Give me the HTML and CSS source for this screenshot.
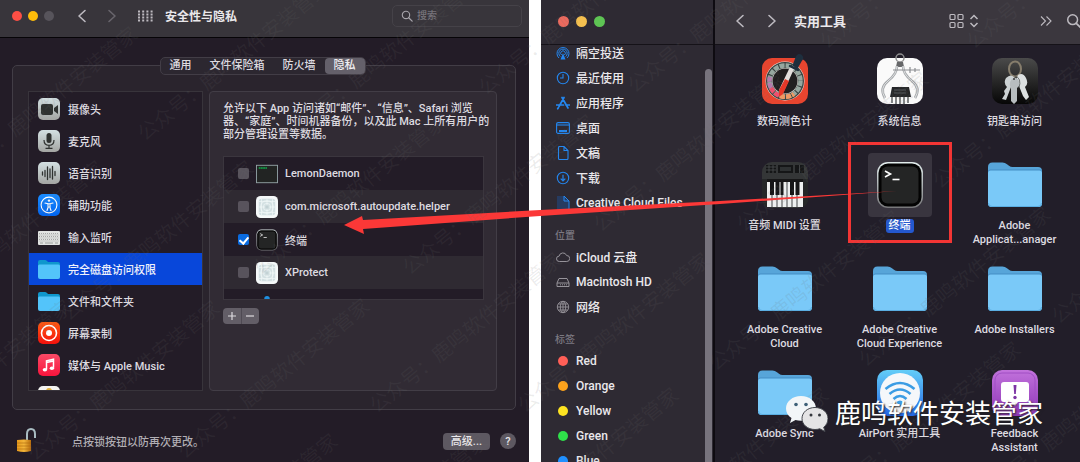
FILE: index.html
```html
<!DOCTYPE html>
<html lang="zh-CN">
<head>
    <meta charset="UTF-8">
    <meta name="viewport" content="width=device-width, initial-scale=1.0">
    <title>安全性与隐私</title>
    <link rel="stylesheet" href="styles.css">
</head>
<body>

    <!-- Shared icon shapes -->
    <svg class="sprite" aria-hidden="true">
        <defs>
            <linearGradient id="silver" x1="0" y1="0" x2="0" y2="1">
                <stop offset="0" stop-color="#d3e0e2"/><stop offset="1" stop-color="#a3a5a2"/>
            </linearGradient>
            <linearGradient id="blue" x1="0" y1="0" x2="0" y2="1">
                <stop offset="0" stop-color="#1a8cff"/><stop offset="1" stop-color="#0064f0"/>
            </linearGradient>
            <linearGradient id="orange" x1="0" y1="0" x2="0" y2="1">
                <stop offset="0" stop-color="#ff5a12"/><stop offset="1" stop-color="#f4110c"/>
            </linearGradient>
            <linearGradient id="pink" x1="0" y1="0" x2="0" y2="1">
                <stop offset="0" stop-color="#fb4a66"/><stop offset="1" stop-color="#f8143c"/>
            </linearGradient>
            <linearGradient id="dark" x1="0" y1="0" x2="0" y2="1">
                <stop offset="0" stop-color="#4a4a4a"/><stop offset="1" stop-color="#060606"/>
            </linearGradient>
            <linearGradient id="sky" x1="0" y1="0" x2="0" y2="1">
                <stop offset="0" stop-color="#63cdf8"/><stop offset="1" stop-color="#2467e6"/>
            </linearGradient>
            <linearGradient id="violet" x1="0" y1="0" x2="0" y2="1">
                <stop offset="0" stop-color="#c272dc"/><stop offset="1" stop-color="#8c35b4"/>
            </linearGradient>
            <linearGradient id="rim" x1="0" y1="0" x2="0" y2="1">
                <stop offset="0" stop-color="#e4efef"/><stop offset="1" stop-color="#77777a"/>
            </linearGradient>
            <linearGradient id="gold" x1="0" y1="0" x2="1" y2="0">
                <stop offset="0" stop-color="#e79a1b"/><stop offset="0.5" stop-color="#f3b53a"/><stop offset="1" stop-color="#b96d0c"/>
            </linearGradient>
        </defs>

        <symbol id="i-search" viewBox="0 0 14 14">
            <circle cx="5.8" cy="5.8" r="4.3" fill="none" stroke="currentColor" stroke-width="1.3"/>
            <path d="M9 9l4 4" stroke="currentColor" stroke-width="1.5" stroke-linecap="round"/>
        </symbol>
        <symbol id="i-left" viewBox="0 0 10 14">
            <path d="M8 1.5L2 7l6 5.5" fill="none" stroke="currentColor" stroke-width="1.6" stroke-linecap="round" stroke-linejoin="round"/>
        </symbol>
        <symbol id="i-right" viewBox="0 0 10 14">
            <path d="M2 1.5L8 7l-6 5.5" fill="none" stroke="currentColor" stroke-width="1.6" stroke-linecap="round" stroke-linejoin="round"/>
        </symbol>

        <symbol id="i-folder-small" viewBox="0 0 22 20">
            <path d="M0 3q0-2 2-2h5q1 0 2 1l1 1h10q2 0 2 2v6H0z" fill="#0f97cd"/>
            <path d="M0 7q0-1.500 1.500-1.500h19q1.500 0 1.500 1.500v11q0 2-2 2H2q-2 0-2-2z" fill="#53c4fa"/>
        </symbol>
        <symbol id="i-folder" viewBox="0 0 54 46">
            <path d="M0 5q0-4.500 4.500-4.500h10q2.500 0 4.500 1.700l2 1.600q1.500 1.200 3.500 1.200H50q4 0 4 4v32H0z" fill="#57a5d9"/>
            <path d="M0 10q0-2.500 2.500-2.500h49q2.500 0 2.500 2.500v31.500q0 3.500-3.500 3.500h-47q-3.500 0-3.500-3.500z" fill="#458ec5"/>
            <path d="M0 11q0-2.500 2.500-2.500h49q2.500 0 2.500 2.500v30q0 4-4 4H4q-4 0-4-4z" fill="#7ac9f8"/>
            <path d="M.5 41q0 3.500 3.500 3.500h46q3.500 0 3.500-3.500" fill="none" stroke="#5aaee2" stroke-width="1"/>
        </symbol>
        <symbol id="i-terminal" viewBox="0 0 48 48">
            <rect x="1" y="1" width="46" height="46" rx="11" fill="url(#rim)"/>
            <rect x="2.5" y="2.5" width="43" height="43" rx="9.5" fill="#030303"/>
            <rect x="5.5" y="5.5" width="37" height="37" rx="6" fill="#242525"/>
            <path d="M9 10l5.500 3L9 16" fill="none" stroke="#fff" stroke-width="1.6"/>
            <path d="M16.500 18.500h7" stroke="#fff" stroke-width="1.6"/>
        </symbol>
        <symbol id="i-installer" viewBox="0 0 24 24">
            <rect width="24" height="24" rx="5" fill="#f5f9f9"/>
            <rect x="3" y="3" width="18" height="18" rx="3" fill="#d3e0e2"/>
            <g fill="none" stroke="#f3f8f8" stroke-width=".7">
                <circle cx="12" cy="12" r="7"/><circle cx="12" cy="12" r="4"/>
                <path d="M3 12h18M12 3v18M6 3v18M18 3v18M3 6h18M3 18h18"/>
            </g>
            <circle cx="12" cy="12" r="2" fill="#c3d2d5"/>
        </symbol>
        <symbol id="i-doc" viewBox="0 0 14 14">
            <path d="M2.500 1.500q0-1 1-1H8l4 4v8q0 1-1 1H3.500q-1 0-1-1zM8 .5v4h4" fill="none" stroke="currentColor" stroke-width="1.1"/>
        </symbol>
        <symbol id="wm" overflow="visible">
            <text x="-10" y="7">公众号：鹿鸣软件安装管家</text>
        </symbol>
    </svg>

    <main class="desktop">

        <!-- System preferences -->
        <section class="window prefs">
            <header class="prefs-bar">
                <div class="lights">
                    <button class="light red" aria-label="关闭"></button>
                    <button class="light amber" aria-label="最小化"></button>
                    <button class="light off" aria-label="缩放"></button>
                </div>
                <button class="bar-btn" aria-label="后退"><svg width="10" height="14"><use href="#i-left"/></svg></button>
                <button class="bar-btn dim" aria-label="前进"><svg width="10" height="14"><use href="#i-right"/></svg></button>
                <button class="bar-btn" aria-label="显示全部">
                    <svg width="16" height="12" viewBox="0 0 16 12">
                        <path d="M0 1.500h15M0 4.500h15M0 7.500h15M0 10.500h15" stroke="currentColor" stroke-width="2" stroke-dasharray="2 2.200"/>
                    </svg>
                </button>
                <h1>安全性与隐私</h1>
                <label class="search">
                    <svg width="12" height="12"><use href="#i-search"/></svg>
                    <input type="search" placeholder="搜索" aria-label="搜索">
                </label>
            </header>

            <div class="group">
                <nav class="tabs">
                    <button>通用</button>
                    <button>文件保险箱</button>
                    <button>防火墙</button>
                    <button class="active">隐私</button>
                </nav>

                <div class="panes">
                    <ul class="services">
                        <li>
                            <svg class="app" viewBox="0 0 22 22"><rect width="22" height="22" rx="5" fill="url(#silver)"/><rect x="3" y="6" width="12" height="11" rx="2" fill="#2f3230"/><path d="M16 10l4-3v9l-4-3z" fill="#2f3230"/></svg>
                            摄像头
                        </li>
                        <li>
                            <svg class="app" viewBox="0 0 22 22"><rect width="22" height="22" rx="5" fill="url(#silver)"/><rect x="8.5" y="3" width="5" height="10" rx="2.5" fill="#2f3230"/><path d="M6 10q0 5.300 5 5.300T16 10M11 15.500v2.500M7.500 18.300h7" fill="none" stroke="#2f3230" stroke-width="1.2"/></svg>
                            麦克风
                        </li>
                        <li>
                            <svg class="app" viewBox="0 0 22 22"><rect width="22" height="22" rx="5" fill="url(#silver)"/><path d="M4.500 10v3M7 8.500v6M9.500 5v12.500M12 7v8.500M14.500 4.500V17M17 9.500v4" stroke="#2f3230" stroke-width="1.3" stroke-linecap="round"/></svg>
                            语音识别
                        </li>
                        <li>
                            <svg class="app" viewBox="0 0 22 22"><rect width="22" height="22" rx="5" fill="url(#blue)"/><circle cx="11" cy="11" r="7.9" fill="none" stroke="#fff" stroke-width="1.1"/><circle cx="11" cy="6.600" r="1.200" fill="#fff"/><path d="M7 9l3 .7h2l3-.7M10 9.700h2v3.300h-2zM10.200 13l-1.200 3.500M11.800 13l1.200 3.500" fill="none" stroke="#fff" stroke-width="1.1" stroke-linecap="round"/></svg>
                            辅助功能
                        </li>
                        <li>
                            <svg class="app" viewBox="0 0 22 22"><rect y="5" width="22" height="14" rx="1" fill="#e2e3e2"/><path d="M1 7.500h20M1 10.500h20M1 13.500h20" stroke="#8b8d8d" stroke-width="1" stroke-dasharray=".7 1.300"/><path d="M1 9h20M1 12h20M1 15h20" stroke="#a8aaaa" stroke-width=".5"/><path d="M2 17h3M7 17h8M17 17h3" stroke="#8b8d8d" stroke-width=".8"/></svg>
                            输入监听
                        </li>
                        <li class="selected">
                            <svg class="app" viewBox="0 0 22 20"><use href="#i-folder-small"/></svg>
                            完全磁盘访问权限
                        </li>
                        <li>
                            <svg class="app" viewBox="0 0 22 20"><use href="#i-folder-small"/></svg>
                            文件和文件夹
                        </li>
                        <li>
                            <svg class="app" viewBox="0 0 22 22"><rect width="22" height="22" rx="5" fill="url(#orange)"/><circle cx="11" cy="11" r="7.5" fill="none" stroke="#fff" stroke-width="1.6"/><circle cx="11" cy="11" r="3" fill="#fff"/></svg>
                            屏幕录制
                        </li>
                        <li>
                            <svg class="app" viewBox="0 0 22 22"><rect width="22" height="22" rx="5" fill="url(#pink)"/><path d="M8.500 15.500V6.800l7-1.600v8.600M8.500 8.500l7-1.600" fill="none" stroke="#fff" stroke-width="1.5"/><ellipse cx="6.9" cy="15.8" rx="2.2" ry="1.8" fill="#fff"/><ellipse cx="13.9" cy="14.2" rx="2.2" ry="1.8" fill="#fff"/></svg>
                            媒体与 Apple Music
                        </li>
                        <li>
                            <svg class="app" viewBox="0 0 22 22"><rect width="22" height="22" rx="5" fill="#f3f3f1"/><circle cx="11" cy="5" r="3" fill="#e0b03c"/></svg>
                        </li>
                    </ul>

                    <div class="detail">
                        <p>允许以下 App 访问诸如“邮件”、“信息”、Safari 浏览<br>器、“家庭”、时间机器备份，以及此 Mac 上所有用户的<br>部分管理设置等数据。</p>
                        <ul class="apps">
                            <li><label>
                                <input type="checkbox">
                                <svg class="app" viewBox="0 0 24 24"><rect x=".5" y="2.5" width="23" height="19" fill="#222423" stroke="#93a3a6"/><path d="M3 5.500h9" stroke="#0fa84a" stroke-width="1.5" stroke-dasharray="2 .4"/></svg>
                                LemonDaemon
                            </label></li>
                            <li><label>
                                <input type="checkbox">
                                <svg class="app"><use href="#i-installer"/></svg>
                                com.microsoft.autoupdate.helper
                            </label></li>
                            <li><label>
                                <input type="checkbox" checked>
                                <svg class="app"><use href="#i-terminal"/></svg>
                                终端
                            </label></li>
                            <li><label>
                                <input type="checkbox">
                                <svg class="app"><use href="#i-installer"/></svg>
                                XProtect
                            </label></li>
                            <li class="next">
                                <svg class="app" viewBox="0 0 24 24"><circle cx="12" cy="4" r="3" fill="#1f8fe0"/></svg>
                            </li>
                        </ul>
                        <div class="stepper">
                            <button aria-label="添加"><svg width="10" height="10" viewBox="0 0 10 10"><path d="M5 1v8M1 5h8" stroke="currentColor" stroke-width="1.2"/></svg></button>
                            <button aria-label="移除"><svg width="10" height="10" viewBox="0 0 10 10"><path d="M1 5h8" stroke="currentColor" stroke-width="1.2"/></svg></button>
                        </div>
                    </div>
                </div>
            </div>

            <footer class="prefs-foot">
                <svg width="20" height="28" viewBox="0 0 20 28">
                    <path d="M11 14V7q0-5 4-5t4 5v4" fill="none" stroke="#a9bcc2" stroke-width="2"/>
                    <path d="M1 13q7-1 14 0v11q-7 2-14 0z" fill="url(#gold)"/>
                    <path d="M1 16h14M1 19h14M1 22h14" stroke="#a9640f" stroke-width=".6"/>
                </svg>
                <span>点按锁按钮以防再次更改。</span>
                <button class="advanced">高级...</button>
                <button class="help" aria-label="帮助">?</button>
            </footer>
        </section>

        <!-- Finder -->
        <section class="window finder">
            <aside class="sidebar">
                <div class="side-top">
                    <div class="lights">
                        <button class="light red" aria-label="关闭"></button>
                        <button class="light amber" aria-label="最小化"></button>
                        <button class="light green" aria-label="缩放"></button>
                    </div>
                </div>
                <nav class="places">
                    <a href="#"><svg viewBox="0 0 14 14"><g fill="none" stroke="currentColor" stroke-width="1"><path d="M3 12a6 6 0 1 1 8 0M4.300 10.500a4.200 4.200 0 1 1 5.400 0M5.600 9a2.300 2.300 0 1 1 2.800 0"/></g><path d="M7 7l2.500 6.500h-5z" fill="currentColor"/></svg>隔空投送</a>
                    <a href="#"><svg viewBox="0 0 14 14"><circle cx="7" cy="7" r="5.7" fill="none" stroke="currentColor" stroke-width="1.1"/><path d="M7 3v4H4" fill="none" stroke="currentColor" stroke-width="1.1"/></svg>最近使用</a>
                    <a href="#"><svg viewBox="0 0 14 14"><path d="M8 1.500L3 10.500M6 1.500l6 10.500M.5 9h7M10 9h3.500M2.300 11.800l-.6 1" fill="none" stroke="currentColor" stroke-width="1.7" stroke-linecap="round"/></svg>应用程序</a>
                    <a href="#"><svg viewBox="0 0 14 14"><rect x=".6" y="1.6" width="12.8" height="10.8" rx="1.5" fill="none" stroke="currentColor" stroke-width="1.1"/><path d="M1 4h12" stroke="currentColor" stroke-width="1.1"/><path d="M3 10h8" stroke="currentColor" stroke-width="2"/></svg>桌面</a>
                    <a href="#"><svg><use href="#i-doc"/></svg>文稿</a>
                    <a href="#"><svg viewBox="0 0 14 14"><circle cx="7" cy="7" r="5.7" fill="none" stroke="currentColor" stroke-width="1.1"/><path d="M7 3.800v6M4.700 7.600L7 10l2.300-2.400" fill="none" stroke="currentColor" stroke-width="1.2"/></svg>下载</a>
                    <a href="#"><svg viewBox="0 0 14 14"><path d="M1 0h7l5 5v9H1z" fill="#263b60"/><path d="M8 0v5h5zM8 0l5 5v9" fill="none" stroke="currentColor" stroke-width="1"/></svg>Creative Cloud Files</a>
                    <h2>位置</h2>
                    <a href="#" class="grey"><svg viewBox="0 0 14 14"><path d="M3.300 11.500a2.700 2.700 0 0 1-.2-5.400 3.900 3.900 0 0 1 7.500-.6 3 3 0 0 1 .2 6z" fill="none" stroke="currentColor" stroke-width="1"/></svg>iCloud 云盘</a>
                    <a href="#" class="grey"><svg viewBox="0 0 14 14"><path d="M1 8l2-4.500h8L13 8v3.500H1zM1 8h12" fill="none" stroke="currentColor" stroke-width="1"/><path d="M4 9.800h7" stroke="currentColor" stroke-dasharray="1 1"/></svg>Macintosh HD</a>
                    <a href="#" class="grey"><svg viewBox="0 0 14 14"><g fill="none" stroke="currentColor" stroke-width=".9"><circle cx="7" cy="7" r="5.7"/><ellipse cx="7" cy="7" rx="2.7" ry="5.7"/><path d="M7 1.300v11.400M1.300 7h11.400M2.300 4h9.400M2.300 10h9.400"/></g></svg>网络</a>
                    <h2>标签</h2>
                    <a href="#"><i class="dot tag-red"></i>Red</a>
                    <a href="#"><i class="dot tag-orange"></i>Orange</a>
                    <a href="#"><i class="dot tag-yellow"></i>Yellow</a>
                    <a href="#"><i class="dot tag-green"></i>Green</a>
                    <a href="#"><i class="dot tag-blue"></i>Blue</a>
                </nav>
                <span class="scroll-thumb"></span>
            </aside>

            <div class="browser">
                <header class="finder-bar">
                    <button class="bar-btn" aria-label="后退"><svg width="10" height="14"><use href="#i-left"/></svg></button>
                    <button class="bar-btn" aria-label="前进"><svg width="10" height="14"><use href="#i-right"/></svg></button>
                    <h1>实用工具</h1>
                    <button class="bar-btn view" aria-label="显示方式">
                        <svg width="30" height="16" viewBox="0 0 30 16" fill="none" stroke="currentColor" stroke-width="1.2">
                            <rect x="1" y="1.5" width="5" height="5" rx="1"/><rect x="9" y="1.5" width="5" height="5" rx="1"/>
                            <rect x="1" y="9.5" width="5" height="5" rx="1"/><rect x="9" y="9.5" width="5" height="5" rx="1"/>
                            <path d="M21.500 6L25 2.500 28.500 6M21.500 10l3.500 3.500 3.500-3.500" stroke-width="1.5"/>
                        </svg>
                    </button>
                    <button class="bar-btn more" aria-label="更多"><svg width="12" height="12" viewBox="0 0 12 12"><path d="M1 1.500L5.500 6 1 10.500M6.500 1.500L11 6l-4.500 4.500" fill="none" stroke="currentColor" stroke-width="1.1"/></svg></button>
                    <button class="bar-btn find" aria-label="搜索"><svg width="16" height="16"><use href="#i-search"/></svg></button>
                </header>

                <div class="files">
                    <a href="#" class="file">
                        <span class="thumb"><svg width="48" height="56" viewBox="0 -4 48 56">
                            <rect x="1" y="1" width="46" height="46" rx="10" fill="#e8452f"/>
                            <circle cx="24" cy="24" r="19.5" fill="#e9e4df"/>
                            <circle cx="24" cy="24" r="16" fill="none" stroke="#3b4442" stroke-width="6"/>
                            <circle cx="24" cy="24" r="15.5" fill="none" stroke="#96a79f" stroke-width="4.5" stroke-dasharray="5 1.100"/>
                            <path d="M9 20a15.500 15.500 0 0 0 1 11" fill="none" stroke="#b77daf" stroke-width="4.5" stroke-dasharray="5 1.100"/>
                            <path d="M10 31a15.500 15.500 0 0 0 8 7.500" fill="none" stroke="#ef4f6d" stroke-width="4.5" stroke-dasharray="5 1.100"/>
                            <path d="M19 39a15.500 15.500 0 0 0 14-2" fill="none" stroke="#ee9a63" stroke-width="4.5" stroke-dasharray="5 1.100"/>
                            <circle cx="24" cy="24" r="12.5" fill="#211f20"/>
                            <path d="M29 10l4 2-11 24-4 4 0-7z" fill="#e3dfdc"/>
                            <path d="M24 22l4 2-6 13-4 3 0-7z" fill="#e63727"/>
                            <path d="M29 9l8 4M33 8l3-8q2-3 4-1t0 4l-4 7z" fill="#1e2f3e" stroke="#1e2f3e" stroke-width="2.5" stroke-linecap="round"/>
                        </svg></span>
                        <span class="name">数码测色计</span>
                    </a>
                    <a href="#" class="file">
                        <span class="thumb"><svg width="48" height="56" viewBox="0 -4 48 56">
                            <rect x="1" y="1" width="46" height="46" rx="10" fill="#fafafa"/>
                            <circle cx="24" cy="1" r="4" fill="none" stroke="#8f8f90" stroke-width="1.5"/>
                            <path d="M21 5h6l1 5h-8z" fill="#666769"/>
                            <path d="M21 9q0 8-9 15t-3 17M27 9q0 8 9 15t3 17" fill="none" stroke="#a5a8ab" stroke-width="2.6"/>
                            <path d="M21 9q0 8-9 15t-3 17M27 9q0 8 9 15t3 17" fill="none" stroke="#dfe1e2" stroke-width="1"/>
                            <path d="M17 13h27M34 10v6M39 11v4" stroke="#8b8e91" stroke-width="1.2"/>
                            <path d="M16 30h17l2 10H14z" fill="#252628"/>
                            <path d="M18 33h12M18 36h12" stroke="#55575a" stroke-width="1"/>
                            <path d="M16 40v6M20 40v7M24 40v7M28 40v7M32 40v6" stroke="#77797b" stroke-width="1.8"/>
                        </svg></span>
                        <span class="name">系统信息</span>
                    </a>
                    <a href="#" class="file">
                        <span class="thumb"><svg width="48" height="56" viewBox="0 -4 48 56">
                            <rect x="1" y="1" width="46" height="46" rx="10" fill="url(#dark)"/>
                            <ellipse cx="24" cy="12" rx="6" ry="7.5" fill="none" stroke="#867d6c" stroke-width="2"/>
                            <path d="M15 21q5-5 9 0t0 8l-4 1-5 13-4-1 3-5-1-3 3-4q-4-4-1-9z" fill="#ccd2d3"/>
                            <path d="M27 18q5-3 8 3t-1 9l4 10-3 3-3-4-4-10q-4-5-1-11z" fill="#dde1e1"/>
                            <path d="M21 22q5-3 7 2t-2 7v13l-3 3-3-3V31q-3-5 1-9z" fill="#b7bdbf"/>
                            <path d="M24 19q7 2 4 12" fill="none" stroke="#565a5a" stroke-width=".8"/>
                            <circle cx="23" cy="22" r="1" fill="#373939"/>
                        </svg></span>
                        <span class="name">钥匙串访问</span>
                    </a>
                    <a href="#" class="file">
                        <span class="thumb"><svg width="48" height="48" viewBox="0 0 48 48">
                            <rect x="1" y="1" width="46" height="46" rx="10" fill="#343637"/>
                            <path d="M5 4h10v8H5zM17 4h15v8H17zM34 4h9v8h-9z" fill="#151617"/>
                            <path d="M5 6h10M5 9h10M8 4v8M12 4v8M38.500 4v8" stroke="#4c4f50" stroke-width=".8"/>
                            <path d="M19 6h11v4H19z" fill="#2e3132"/>
                            <path d="M5 18h38v28H5z" fill="#171718"/>
                            <path d="M6 21h36v25H6z" fill="#eef0f0"/>
                            <path d="M11 21v25M16 21v25M21 21v25M26 21v25M31 21v25M36 21v25" stroke="#454748" stroke-width="1"/>
                            <path d="M9 20h4v14H9zM14.500 20h4v14h-4zM19.500 20h3v14h-3zM29 20h4v14h-4zM34.500 20h4v14h-4z" fill="#161617"/>
                            <path d="M1 18h5v28q-5-2-5-8zM42 18h5v20q0 6-5 8z" fill="#252728"/>
                        </svg></span>
                        <span class="name">音频 MIDI 设置</span>
                    </a>
                    <a href="#" class="file picked">
                        <span class="thumb"><svg width="48" height="48"><use href="#i-terminal"/></svg></span>
                        <span class="name">终端</span>
                    </a>
                    <a href="#" class="file">
                        <span class="thumb"><svg width="54" height="46"><use href="#i-folder"/></svg></span>
                        <span class="name">Adobe<br>Applicat...anager</span>
                    </a>
                    <a href="#" class="file">
                        <span class="thumb"><svg width="54" height="46"><use href="#i-folder"/></svg></span>
                        <span class="name">Adobe Creative<br>Cloud</span>
                    </a>
                    <a href="#" class="file">
                        <span class="thumb"><svg width="54" height="46"><use href="#i-folder"/></svg></span>
                        <span class="name">Adobe Creative<br>Cloud Experience</span>
                    </a>
                    <a href="#" class="file">
                        <span class="thumb"><svg width="54" height="46"><use href="#i-folder"/></svg></span>
                        <span class="name">Adobe Installers</span>
                    </a>
                    <a href="#" class="file">
                        <span class="thumb"><svg width="54" height="46"><use href="#i-folder"/></svg></span>
                        <span class="name">Adobe Sync</span>
                    </a>
                    <a href="#" class="file">
                        <span class="thumb"><svg width="48" height="48" viewBox="0 0 48 48">
                            <rect x="1" y="1" width="46" height="46" rx="10" fill="url(#sky)"/>
                            <circle cx="24" cy="24" r="20" fill="#f5f7fa"/>
                            <g fill="none" stroke="#3b9ce4" stroke-width="2.6">
                                <path d="M9.500 20q14.500-12 29 0M13.500 25q10.500-9 21 0M17.500 30q6.500-6 13 0"/>
                            </g>
                            <path d="M20.500 33q3.500-3 7 0L24 38z" fill="#3b9ce4"/>
                        </svg></span>
                        <span class="name">AirPort 实用工具</span>
                    </a>
                    <a href="#" class="file">
                        <span class="thumb"><svg width="48" height="48" viewBox="0 0 48 48">
                            <rect x="1" y="1" width="46" height="46" rx="10" fill="url(#violet)"/>
                            <rect x="4" y="4" width="40" height="40" rx="7" fill="none" stroke="#a04fc4" stroke-width="1"/>
                            <path d="M13 13h22q3 0 3 3v14q0 3-3 3h-8l-3 4-4-4h-7q-3 0-3-3V16q0-3 3-3z" fill="#fff"/>
                            <path d="M22.500 16h3l-.7 9h-1.600z" fill="#7d35a4"/><circle cx="24" cy="28.5" r="1.7" fill="#7d35a4"/>
                        </svg></span>
                        <span class="name">Feedback<br>Assistant</span>
                    </a>
                </div>
            </div>
        </section>

        <!-- Drag arrow -->
        <svg class="arrow" viewBox="0 0 1080 462" preserveAspectRatio="none" aria-hidden="true">
            <polygon points="344,225 362,216 363,220 540,210 720,201 897,191 720,204 540,216 363,229 364,234" fill="#fb3837"/>
        </svg>

        <!-- Diagonal watermark -->
        <svg class="watermark" aria-hidden="true">
            <use href="#wm" transform="translate(-193 176) rotate(-39)"/>
            <use href="#wm" transform="translate(-44 176) rotate(-39)"/>
            <use href="#wm" transform="translate(148 130) rotate(-39)"/>
            <use href="#wm" transform="translate(297 128) rotate(-39)"/>
            <use href="#wm" transform="translate(489 84) rotate(-39)"/>
            <use href="#wm" transform="translate(638 82) rotate(-39)"/>
            <use href="#wm" transform="translate(830 38) rotate(-39)"/>
            <use href="#wm" transform="translate(977 38) rotate(-39)"/>
            <use href="#wm" transform="translate(-78 310) rotate(-39)"/>
            <use href="#wm" transform="translate(72 310) rotate(-39)"/>
            <use href="#wm" transform="translate(264 264) rotate(-39)"/>
            <use href="#wm" transform="translate(413 264) rotate(-39)"/>
            <use href="#wm" transform="translate(604 221) rotate(-39)"/>
            <use href="#wm" transform="translate(747 221) rotate(-39)"/>
            <use href="#wm" transform="translate(943 178) rotate(-39)"/>
            <use href="#wm" transform="translate(-110 449) rotate(-39)"/>
            <use href="#wm" transform="translate(38 450) rotate(-39)"/>
            <use href="#wm" transform="translate(188 448) rotate(-39)"/>
            <use href="#wm" transform="translate(380 402) rotate(-39)"/>
            <use href="#wm" transform="translate(528 402) rotate(-39)"/>
            <use href="#wm" transform="translate(719 360) rotate(-39)"/>
            <use href="#wm" transform="translate(869 356) rotate(-39)"/>
            <use href="#wm" transform="translate(1062 313) rotate(-39)"/>
            <use href="#wm" transform="translate(156 583) rotate(-39)"/>
            <use href="#wm" transform="translate(306 583) rotate(-39)"/>
            <use href="#wm" transform="translate(497 537) rotate(-39)"/>
            <use href="#wm" transform="translate(647 537) rotate(-39)"/>
            <use href="#wm" transform="translate(839 491) rotate(-39)"/>
            <use href="#wm" transform="translate(989 491) rotate(-39)"/>
        </svg>

        <!-- Channel signature -->
        <div class="signature">
            <svg width="42" height="36" viewBox="0 0 42 36">
                <path d="M15 0C6.500 0 0 5.500 0 12.500c0 4 2 7.300 5.500 9.600L4 27l5.500-3q2.500.8 5.500.8c8.500 0 15-5.300 15-12.300S23.500 0 15 0z" fill="#f2f6f8"/>
                <circle cx="10" cy="8.5" r="1.8" fill="#3d6077"/><circle cx="20" cy="8.5" r="1.8" fill="#3d6077"/>
                <path d="M29 11.500c-7.300 0-13 4.800-13 11s5.700 11 13 11q2.500 0 4.800-.7L39 35.500l-1.300-4.300c2.700-2 4.300-5 4.300-8.700 0-6.200-5.700-11-13-11z" fill="#e4e4e5" stroke="#43464c" stroke-width="1"/>
                <circle cx="25" cy="19" r="1.5" fill="#35383d"/><circle cx="33.5" cy="19" r="1.5" fill="#35383d"/>
            </svg>
            <span>鹿鸣软件安装管家</span>
        </div>
    </main>

</body>
</html>
```
FILE: styles.css
```css
* {
    box-sizing: border-box;
}

body {
    margin: 0;
    background: #fff;
    color: #dedbe0;
    font-family: Roboto, "Noto Sans CJK SC", sans-serif;
    font-size: 11px;
    font-weight: 500;
}

h1, h2, p, ul {
    margin: 0;
    padding: 0;
    list-style: none;
}

a {
    color: inherit;
    text-decoration: none;
}

button, input {
    font: inherit;
    color: inherit;
    border: none;
    background: none;
    padding: 0;
    margin: 0;
}

svg {
    display: block;
    flex: none;
}

.sprite {
    position: absolute;
    width: 0;
    height: 0;
}

.desktop {
    position: relative;
    display: grid;
    grid-template-columns: 529fr 539fr;
    gap: 12px;
    height: 100vh;
    overflow: hidden;
}

.window {
    min-width: 0;
    overflow: hidden;
}

/* Traffic lights */
.lights {
    display: flex;
    gap: 6px;
}

.light {
    width: 10px;
    height: 10px;
    border-radius: 50%;
}

.red { background: #fd4f45; }
.amber { background: #fdbc0a; }
.off { background: #57545b; }
.green { background: #5ec454; }

.bar-btn {
    display: flex;
    color: #bdbac0;
}

.bar-btn.dim {
    color: #68656c;
}

/* Preferences window */
.prefs {
    background: #231c27;
    display: flex;
    flex-direction: column;
}

.prefs-bar {
    display: flex;
    align-items: center;
    gap: 16px;
    height: 38px;
    padding: 0 7px 6px 12px;
    background: #38353b;
    border-bottom: 1px solid #060407;
}

.prefs-bar .lights {
    margin-right: 7px;
}

.prefs-bar .bar-btn.dim {
    margin: 0 5px 0 4px;
}

.prefs-bar h1 {
    font-size: 12px;
    font-weight: 700;
    color: #e9e7ea;
    margin-left: -5px;
}

.search {
    display: flex;
    align-items: center;
    gap: 4px;
    width: 130px;
    height: 22px;
    margin-left: auto;
    padding: 0 8px;
    border: 1px solid #454248;
    border-radius: 5px;
    color: #a7a4aa;
}

.search input {
    width: 100%;
    font-size: 10px;
    outline: none;
}

.search input::placeholder {
    color: #77747b;
}

.group {
    margin: 27px 13px 0 12px;
    padding: 0 18px 18px 15px;
    background: #2a242d;
    border: 1px solid #423d46;
    border-radius: 5px;
}

.tabs {
    display: flex;
    width: max-content;
    height: 18px;
    margin: -9px auto 16px;
    background: #2c2730;
    border: 1px solid #423d46;
    border-radius: 5px;
}

.tabs button {
    padding: 0 9px;
    line-height: 14px;
}

.tabs button.active {
    background: #64606a;
    border-radius: 4px;
    color: #f1eff2;
}

.panes {
    display: flex;
    gap: 6px;
    height: 300px;
}

/* Left list of services */
.services {
    flex: 0 1 175px;
    padding-top: 1px;
    background: #231c27;
    border: 1px solid #38343b;
    overflow: hidden;
}

.services li {
    display: flex;
    align-items: center;
    gap: 8px;
    height: 32px;
    padding-left: 9px;
    white-space: nowrap;
}

.app {
    width: 22px;
    height: 22px;
}

.services .selected {
    background: #0847da;
    color: #f0f2fb;
}

.detail {
    flex: 1;
    min-width: 0;
    padding: 10px 12px 0 13px;
    background: #312b34;
    border: 1px solid #423d46;
    border-radius: 4px;
}

.detail p {
    line-height: 13px;
    height: 54px;
    white-space: nowrap;
}

.apps {
    height: 144px;
    border: 1px solid #3b363e;
    background: #231c27;
    overflow: hidden;
}

.apps li {
    height: 33px;
}

.apps li:nth-child(even) {
    background: #2f2a32;
}

.apps label {
    display: flex;
    align-items: center;
    gap: 7px;
    height: 33px;
    padding-left: 14px;
}

.apps .next {
    padding: 6px 0 0 32px;
}

.apps input {
    appearance: none;
    display: grid;
    place-items: center;
    width: 11px;
    height: 11px;
    border-radius: 2px;
    background: #58535c;
}

.apps input:checked {
    background: #0a6be0;
}

.apps input:checked::after {
    content: "";
    width: 4px;
    height: 7px;
    border: solid #fff;
    border-width: 0 2px 2px 0;
    transform: rotate(40deg);
}

.stepper {
    display: flex;
    width: 36px;
    height: 16px;
    margin-top: 8px;
    background: #635e67;
    border-radius: 4px;
}

.stepper button {
    flex: 1;
    display: grid;
    place-items: center;
}

.stepper button + button {
    border-left: 1px solid #4f4a53;
}

.prefs-foot {
    display: flex;
    align-items: center;
    gap: 10px;
    padding: 17px 13px 0 16px;
    color: #b1aeb4;
}

.prefs-foot span {
    margin-right: auto;
    padding-left: 26px;
}

.advanced {
    height: 17px;
    padding: 0 8px;
    line-height: 15px;
    background: #5d5861;
    border-radius: 4px;
    color: #e9e7ea;
}

.help {
    width: 16px;
    height: 16px;
    background: #5d5861;
    border-radius: 50%;
    color: #e9e7ea;
}

/* Finder window */
.finder {
    display: flex;
    background: #221e29;
}

.sidebar {
    position: relative;
    flex: 0 0 174px;
    background: #2e2a33;
    border-right: 2px solid #0e0b11;
}

.side-top {
    height: 45px;
    padding: 16px 17px;
    border-bottom: 1px solid #151218;
}

.side-top .lights {
    gap: 7px;
}

.side-top .light {
    width: 11px;
    height: 11px;
}

.side-top .red { background: #ec6a5e; }
.side-top .amber { background: #f4bf4f; }

.places {
    margin-top: -5px;
    clip-path: inset(5px 0 0 0);
    font-size: 12px;
    color: #eae8ec;
}

.places a {
    display: flex;
    align-items: center;
    gap: 6px;
    height: 25px;
    padding-left: 15px;
    white-space: nowrap;
}

.places svg {
    width: 14px;
    height: 14px;
    color: #2487f0;
}

.places .grey svg {
    color: #96939a;
}

.places h2 {
    height: 29px;
    padding: 14px 0 0 14px;
    font-size: 10px;
    line-height: 14px;
    font-weight: 500;
    color: #7c7982;
}

.dot {
    width: 10px;
    height: 10px;
    margin: 0 2px;
    border-radius: 50%;
}

.tag-red { background: #ff5f57; }
.tag-orange { background: #fda31c; }
.tag-yellow { background: #fde321; }
.tag-green { background: #2fe04a; }
.tag-blue { background: #2090ff; }

.scroll-thumb {
    position: absolute;
    top: 69px;
    right: 1px;
    bottom: 0;
    width: 7px;
    background: #77737d;
    border-radius: 4px 4px 0 0;
}

.browser {
    flex: 1;
    min-width: 0;
}

.finder-bar {
    display: flex;
    align-items: center;
    gap: 22px;
    height: 45px;
    padding: 0 0 3px 20px;
    background: #3b373e;
    border-bottom: 1px solid #151218;
}

.finder-bar h1 {
    margin: 0 auto 0 -5px;
    font-size: 13px;
    font-weight: 700;
    color: #ebe9ec;
}

.finder-bar .view {
    margin-right: 39px;
}

.finder-bar .find {
    margin: 0 -2px 0 -8px;
}

.files {
    display: grid;
    grid-template-columns: repeat(3, 1fr);
    grid-auto-rows: 104px;
    padding: 4px 8px 0 12px;
}

.file {
    position: relative;
    display: flex;
    flex-direction: column;
    align-items: center;
    gap: 2px;
}

.thumb {
    display: grid;
    place-items: center;
    width: 64px;
    height: 64px;
    flex: none;
    border-radius: 4px;
}

.name {
    padding: 0 3px;
    line-height: 14px;
    text-align: center;
    white-space: nowrap;
    border-radius: 3px;
}

.picked .thumb {
    background: #39353f;
}

.picked .name {
    background: #2458cf;
    color: #fff;
}

/* Red frame round the chosen app */
.picked::after {
    content: "";
    position: absolute;
    inset: -11px 5px 14px 6px;
    border: 3px solid #f33534;
}

/* Overlays */
.arrow,
.watermark {
    position: absolute;
    inset: 0;
    width: 100%;
    height: 100%;
    pointer-events: none;
}

.watermark {
    font-size: 20px;
    font-weight: 400;
    fill: rgba(110, 110, 110, 0.13);
}

.signature {
    position: absolute;
    right: 37px;
    bottom: 30px;
    display: flex;
    align-items: center;
    gap: 7px;
    color: #fff;
    font-size: 26px;
    font-weight: 400;
    line-height: 36px;
    text-shadow: 1px 1px 2px #222;
}
```
